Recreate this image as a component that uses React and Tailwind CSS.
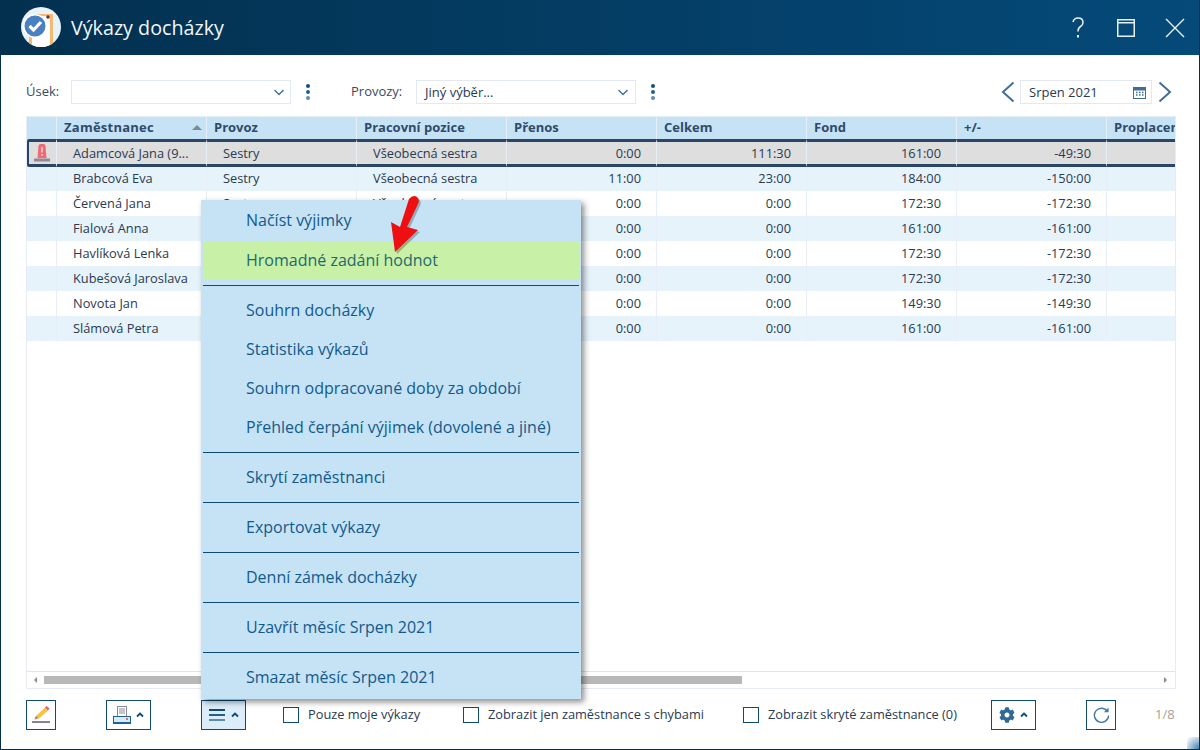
import React from "react";
import { FaCog } from "react-icons/fa";

const rows = [
  { name: "Adamcová Jana (9...", prenos: "0:00", celkem: "111:30", fond: "161:00", diff: "-49:30", selected: true },
  { name: "Brabcová Eva", prenos: "11:00", celkem: "23:00", fond: "184:00", diff: "-150:00" },
  { name: "Červená Jana", prenos: "0:00", celkem: "0:00", fond: "172:30", diff: "-172:30" },
  { name: "Fialová Anna", prenos: "0:00", celkem: "0:00", fond: "161:00", diff: "-161:00" },
  { name: "Havlíková Lenka", prenos: "0:00", celkem: "0:00", fond: "172:30", diff: "-172:30" },
  { name: "Kubešová Jaroslava", prenos: "0:00", celkem: "0:00", fond: "172:30", diff: "-172:30" },
  { name: "Novota Jan", prenos: "0:00", celkem: "0:00", fond: "149:30", diff: "-149:30" },
  { name: "Slámová Petra", prenos: "0:00", celkem: "0:00", fond: "161:00", diff: "-161:00" },
];

const headers = ["Provoz", "Pracovní pozice", "Přenos", "Celkem", "Fond", "+/-"];

const menuGroups = [
  ["Načíst výjimky", "Hromadné zadání hodnot"],
  ["Souhrn docházky", "Statistika výkazů", "Souhrn odpracované doby za období", "Přehled čerpání výjimek (dovolené a jiné)"],
  ["Skrytí zaměstnanci"],
  ["Exportovat výkazy"],
  ["Denní zámek docházky"],
  ["Uzavřít měsíc Srpen 2021"],
  ["Smazat měsíc Srpen 2021"],
];

const Logo = () => (
  <svg width="40" height="40" viewBox="0 0 40 40">
    <defs>
      <clipPath id="logoClip">
        <circle cx="20" cy="20" r="20" />
      </clipPath>
    </defs>
    <circle cx="20" cy="20" r="20" fill="#e8f2fb" />
    <g clipPath="url(#logoClip)">
      <rect x="8" y="26" width="24" height="14" fill="#f5b971" />
      <rect x="29" y="8" width="3" height="32" fill="#f5b971" />
      <rect x="14" y="7" width="18" height="2" fill="#f5b971" />
      <rect x="11" y="9" width="18" height="31" fill="#ffffff" />
    </g>
    <circle cx="27" cy="10" r="1.800" fill="#6b2f1e" />
    <circle cx="14" cy="19" r="12" fill="#ffffff" />
    <circle cx="14" cy="19" r="10.500" fill="#4a7fc1" />
    <path d="M8.500 19 L12.500 23 L20 15" fill="none" stroke="#ffffff" strokeWidth="3.200" />
  </svg>
);

const Dots = () => (
  <div className="flex flex-col gap-[2px] items-center">
    <span className="w-1 h-1 rounded-full bg-[#0f4f7f]" />
    <span className="w-1 h-1 rounded-full bg-[#23608f]" />
    <span className="w-1 h-1 rounded-full bg-[#5d8cb0]" />
  </div>
);

const Chevron = () => (
  <svg width="10" height="7" viewBox="0 0 10 7">
    <path d="M0.500 1 L5 5.500 L9.500 1" fill="none" stroke="#3f6f97" strokeWidth="1.400" />
  </svg>
);

const SmallCaret = () => (
  <svg width="8" height="6" viewBox="0 0 8 6">
    <path d="M1 4.500 L4 1.500 L7 4.500" fill="none" stroke="#0d4a78" strokeWidth="1.800" />
  </svg>
);

const Alarm = () => (
  <svg width="16" height="18" viewBox="0 0 16 18">
    <path d="M3.500 14 L4.500 2 Q4.700 0 6.500 0 H9.500 Q11.300 0 11.500 2 L12.500 14 Z" fill="#ee6a70" />
    <rect x="7.200" y="3" width="1.600" height="5.500" fill="#f9d0d2" />
    <rect x="7.200" y="10" width="1.600" height="1.800" fill="#f9d0d2" />
    <rect x="0" y="14.500" width="16" height="3" fill="#9a8298" />
  </svg>
);

const Cell = ({ children, className = "" }) => (
  <div className={`w-[150px] shrink-0 h-full flex items-center border-r border-[#e8eef8] ${className}`}>
    {children}
  </div>
);

const FooterButton = ({ children, className = "" }) => (
  <button className={`h-[30px] flex items-center justify-center border border-[#0d4a78] ${className}`}>
    {children}
  </button>
);

const Check = ({ label, className = "" }) => (
  <label className={`flex items-center text-[12.8px] text-[#2a3a50] ${className}`}>
    <span className="w-4 h-4 border border-[#0d4a78] bg-white shrink-0" />
    <span className="ml-[9px] whitespace-nowrap">{label}</span>
  </label>
);

export default function App() {
  return (
    <div
      className="relative w-[1200px] h-[750px] overflow-hidden bg-white flex flex-col border-x border-b border-[#03304f]"
      style={{ fontFamily: '"Open Sans", sans-serif' }}
    >
      {/* title bar */}
      <div className="h-[55px] shrink-0 -mx-px flex items-center bg-gradient-to-r from-[#03304f] to-[#054a7a] text-white">
        <div className="ml-[21px] mt-[-1px]">
          <Logo />
        </div>
        <div className="ml-[10px] text-[19.7px] text-[#f2f7fb]">Výkazy docházky</div>
        <div className="ml-auto flex items-center">
          <svg width="14" height="24" viewBox="0 0 14 24">
            <path d="M2 6 Q3 2 7 2 Q12 2 12 6.500 Q12 9 9.500 10.500 Q7 12 7 15.500" fill="none" stroke="#e8f0f6" strokeWidth="1.500" />
            <rect x="6" y="19" width="2" height="2.500" fill="#e8f0f6" />
          </svg>
          <svg className="ml-[32px]" width="18" height="18" viewBox="0 0 18 18">
            <rect x="0.750" y="0.750" width="16.500" height="16.500" fill="none" stroke="#e8f0f6" strokeWidth="1.500" />
            <rect x="0.750" y="3" width="16.500" height="1.500" fill="#e8f0f6" />
          </svg>
          <svg className="ml-[30px] mr-[15px]" width="20" height="20" viewBox="0 0 20 20">
            <path d="M1 1 L19 19 M19 1 L1 19" stroke="#e8f0f6" strokeWidth="1.400" />
          </svg>
        </div>
      </div>

      {/* filters */}
      <div className="mt-[25px] h-6 flex items-center text-[13px] text-[#3c4a5c] ml-[25px] mr-[23px]">
        <span className="w-[45px]">Úsek:</span>
        <div className="w-[220px] h-6 border border-[#e3e8f5] flex items-center justify-end pr-[6px]">
          <Chevron />
        </div>
        <div className="ml-[15px]">
          <Dots />
        </div>
        <span className="ml-[41px] w-[65px]">Provozy:</span>
        <div className="w-[220px] h-6 border border-[#e3e8f5] flex items-center justify-between pl-2 pr-[7px] text-[#2a3a50]">
          <span className="pt-px">Jiný výběr...</span>
          <Chevron />
        </div>
        <div className="ml-[15px]">
          <Dots />
        </div>
        <svg className="ml-auto" width="14" height="22" viewBox="0 0 14 22">
          <path d="M12.500 1.500 L2 11 L12.500 20.500" fill="none" stroke="#3f6f9c" strokeWidth="2" />
        </svg>
        <div className="ml-[5px] w-[132px] h-6 border border-[#e3e8f5] flex items-center justify-between pl-2 pr-[5px] text-[#2a3a50]">
          <span className="pt-px">Srpen 2021</span>
          <svg width="13" height="13" viewBox="0 0 13 13">
            <rect x="0.500" y="1.500" width="12" height="11" fill="none" stroke="#3f6f97" />
            <rect x="0.500" y="1.500" width="12" height="3" fill="#3f6f97" />
            <path d="M3 6.500 h1.500 M6 6.500 h1.500 M9 6.500 h1.500 M3 9 h1.500 M6 9 h1.500 M9 9 h1.500" stroke="#3f6f97" strokeWidth="1.500" />
          </svg>
        </div>
        <svg className="ml-[6px] mr-[4px]" width="14" height="22" viewBox="0 0 14 22">
          <path d="M1.500 1.500 L12 11 L1.500 20.500" fill="none" stroke="#3f6f9c" strokeWidth="2" />
        </svg>
      </div>

      {/* table */}
      <div className="mt-3 ml-[25px] mr-[23px] h-[573px] border border-[#e6ebf5] flex flex-col overflow-hidden text-[13px]">
        <div className="h-[23px] -mt-px shrink-0 flex bg-[#c5e3f5] font-bold text-[#2f4a6c]">
          <div className="w-[30px] shrink-0 h-full border-r border-[#e8eef8]" />
          <Cell className="pl-[7px] pr-[4px] justify-between">
            <span className="tracking-[0.25px]">Zaměstnanec</span>
            <span className="w-0 h-0 border-x-[5px] border-x-transparent border-b-[5px] border-b-[#7d8a96]" />
          </Cell>
          {headers.map((h) => (
            <Cell key={h} className="pl-[7px]">
              {h}
            </Cell>
          ))}
          <div className="pl-[7px] flex items-center whitespace-nowrap">Proplacení</div>
        </div>

        <div className="h-[532px] shrink-0">
          {rows.map((r, i) => {
            const sel = r.selected ? "border-y-[3px] border-y-[#2a4666]" : "";
            const selText = r.selected ? "pt-px" : "";
            return (
              <div
                key={r.name}
                className={`flex text-[12.8px] text-[#2a3a50] ${
                  r.selected
                    ? "h-[28px] bg-[#dedede]"
                    : i === 1
                      ? "h-[24px] bg-[#e6f3fb]"
                      : i % 2 === 1
                        ? "h-[25px] bg-[#e6f3fb]"
                        : "h-[25px] bg-white"
                }`}
              >
                <div
                  className={`w-[30px] shrink-0 h-full flex items-center justify-center border-r border-[#e8eef8] ${sel} ${
                    r.selected ? "shadow-[inset_2px_0_0_#2a4666] rounded-l-[2px]" : ""
                  }`}
                >
                  {r.selected && <Alarm />}
                </div>
                <Cell className={`pl-4 whitespace-nowrap ${sel} ${selText}`}>{r.name}</Cell>
                <Cell className={`pl-4 ${sel} ${selText}`}>Sestry</Cell>
                <Cell className={`pl-4 whitespace-nowrap ${sel} ${selText}`}>Všeobecná sestra</Cell>
                <Cell className={`justify-end pr-[15px] ${sel} ${selText}`}>{r.prenos}</Cell>
                <Cell className={`justify-end pr-[15px] ${sel} ${selText}`}>{r.celkem}</Cell>
                <Cell className={`justify-end pr-[15px] ${sel} ${selText}`}>{r.fond}</Cell>
                <Cell className={`justify-end pr-[15px] ${sel} ${selText}`}>{r.diff}</Cell>
                <div className={`flex-1 ${sel}`} />
              </div>
            );
          })}
        </div>

        <div className="h-[16px] shrink-0 border-t border-[#e2e4ea] flex items-center">
          <span className="ml-[7px] w-0 h-0 border-y-[3px] border-y-transparent border-r-[3px] border-r-[#8a8a8a]" />
          <div className="ml-[7px] w-[698px] h-2 bg-[#b8b8b8]" />
          <span className="ml-auto mr-[8px] w-0 h-0 border-y-[3px] border-y-transparent border-l-[3px] border-l-[#8a8a8a]" />
        </div>
      </div>

      {/* footer */}
      <div className="mt-[11px] ml-[25px] flex items-center">
        <FooterButton className="w-[30px]">
          <svg width="22" height="22" viewBox="0 0 22 22">
            <path d="M4.500 15.500 L6 12 L15 3.500 L18 6.500 L9 14.500 Z" fill="#f5c242" />
            <path d="M4.500 15.500 L6 12 L8 14 Z" fill="#8f7f92" />
            <path d="M15 3.500 L16.500 2 L19.500 4.500 L18 6.500 Z" fill="#e0605e" />
            <rect x="2" y="17" width="18" height="2" fill="#8f7f92" />
          </svg>
        </FooterButton>
        <FooterButton className="ml-[50px] w-[45px] gap-[5px]">
          <svg width="18" height="18" viewBox="0 0 18 18">
            <rect x="4.500" y="0.500" width="9" height="10" fill="#fff" stroke="#8a8aa0" />
            <rect x="6" y="2" width="6" height="6" fill="#c4c4ce" />
            <rect x="0.500" y="10.500" width="17" height="7" fill="#d8eaf6" stroke="#1e6290" />
            <rect x="0" y="16" width="18" height="2" fill="#1e6290" />
            <rect x="13" y="12" width="2" height="2" fill="#ee6a70" />
          </svg>
          <SmallCaret />
        </FooterButton>
        <FooterButton className="ml-[50px] w-[45px] gap-[6px] bg-[#dcedf9]">
          <svg width="16" height="12" viewBox="0 0 16 12">
            <rect y="0" width="16" height="2" fill="#0d4a78" />
            <rect y="5" width="16" height="2" fill="#24608e" />
            <rect y="10" width="16" height="2" fill="#5a8bb0" />
          </svg>
          <SmallCaret />
        </FooterButton>
        <Check label="Pouze moje výkazy" className="ml-[37px] w-[180px]" />
        <Check label="Zobrazit jen zaměstnance s chybami" className="w-[280px]" />
        <Check label="Zobrazit skryté zaměstnance (0)" className="w-[248px]" />
        <FooterButton className="w-[45px] gap-[5px]">
          <FaCog size={16} color="#2f6a97" />
          <SmallCaret />
        </FooterButton>
        <FooterButton className="ml-[50px] w-[30px]">
          <svg width="17" height="17" viewBox="0 0 18 18">
            <path d="M15.500 5 A7.500 7.500 0 1 0 16.500 9" fill="none" stroke="#3f7ba8" strokeWidth="1.500" />
            <path d="M11.500 5.500 H16.500 V0.500 Z" fill="#3f7ba8" />
          </svg>
        </FooterButton>
        <span className="ml-[39px] text-[13px] text-[#a89f94]">1/8</span>
      </div>

      {/* popup menu */}
      <div className="absolute left-[200px] top-[200px] w-[380px] h-[499px] pt-[2px] px-[2px] bg-[#c5e3f5] shadow-[3px_3px_6px_rgba(0,0,0,0.45)] text-[16px] text-[#14598c]">
        {menuGroups.map((group, g) => (
          <div key={g} className={g > 0 ? "mt-[6px] border-t border-[#0d4a78] pt-[4px]" : ""}>
            {group.map((item, j) => (
              <div
                key={item}
                className={`pl-[43px] flex items-center whitespace-nowrap ${
                  item === "Hromadné zadání hodnot"
                    ? "h-[38px] bg-[#c8f0a6] text-[#1c6a70]"
                    : g === 0 && j === 0
                      ? "h-[39px] pb-[3px]"
                      : "h-[39px]"
                }`}
              >
                {item}
              </div>
            ))}
          </div>
        ))}
      </div>

      {/* red arrow over the menu */}
      <svg className="absolute left-[383px] top-[192px]" width="46" height="66" viewBox="0 0 46 66">
        <path
          d="M25 7 Q29 2 33 5 Q36 8 34 12 L23 35 L34 38 L11 60 L7 30 L16 35 Z"
          fill="#000"
          opacity="0.25"
          transform="translate(2 2)"
        />
        <path d="M25 7 Q29 2 33 5 Q36 8 34 12 L23 35 L34 38 L11 60 L7 30 L16 35 Z" fill="#ee0f12" />
      </svg>

      {/* resize corner */}
      <div className="absolute right-0 bottom-0 w-[12px] h-[12px] bg-[radial-gradient(circle_at_bottom_right,#3f7fb0,#ffffff_95%)]" />
    </div>
  );
}
